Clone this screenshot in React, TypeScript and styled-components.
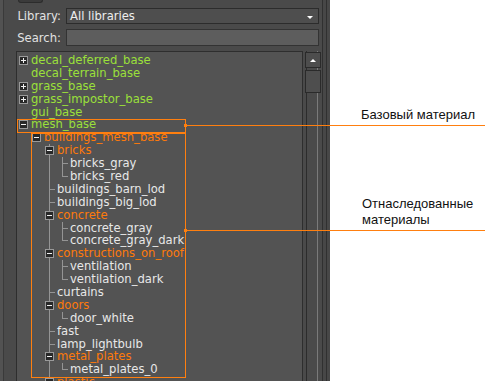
import React from "react";
import styled, { createGlobalStyle, css } from "styled-components";

type Tone = "base" | "derived" | "plain";
type Mark = "plus" | "minus" | "tee" | "end" | "none";

type TreeNode = {
  name: string;
  level: number;
  tone: Tone;
  mark: Mark;
  rails?: number[]; // levels whose guide line runs through this row
};

const nodes: TreeNode[] = [
  { name: "decal_deferred_base", level: 0, tone: "base", mark: "plus" },
  { name: "decal_terrain_base", level: 0, tone: "base", mark: "none" },
  { name: "grass_base", level: 0, tone: "base", mark: "plus" },
  { name: "grass_impostor_base", level: 0, tone: "base", mark: "plus" },
  { name: "gui_base", level: 0, tone: "base", mark: "none" },
  { name: "mesh_base", level: 0, tone: "base", mark: "minus" },
  { name: "buildings_mesh_base", level: 1, tone: "derived", mark: "minus" },
  { name: "bricks", level: 2, tone: "derived", mark: "minus", rails: [2] },
  { name: "bricks_gray", level: 3, tone: "plain", mark: "tee", rails: [2] },
  { name: "bricks_red", level: 3, tone: "plain", mark: "end", rails: [2] },
  { name: "buildings_barn_lod", level: 2, tone: "plain", mark: "tee" },
  { name: "buildings_big_lod", level: 2, tone: "plain", mark: "tee" },
  { name: "concrete", level: 2, tone: "derived", mark: "minus", rails: [2] },
  { name: "concrete_gray", level: 3, tone: "plain", mark: "tee", rails: [2] },
  { name: "concrete_gray_dark", level: 3, tone: "plain", mark: "end", rails: [2] },
  { name: "constructions_on_roof", level: 2, tone: "derived", mark: "minus", rails: [2] },
  { name: "ventilation", level: 3, tone: "plain", mark: "tee", rails: [2] },
  { name: "ventilation_dark", level: 3, tone: "plain", mark: "end", rails: [2] },
  { name: "curtains", level: 2, tone: "plain", mark: "tee" },
  { name: "doors", level: 2, tone: "derived", mark: "minus", rails: [2] },
  { name: "door_white", level: 3, tone: "plain", mark: "end", rails: [2] },
  { name: "fast", level: 2, tone: "plain", mark: "tee" },
  { name: "lamp_lightbulb", level: 2, tone: "plain", mark: "tee" },
  { name: "metal_plates", level: 2, tone: "derived", mark: "minus", rails: [2] },
  { name: "metal_plates_0", level: 3, tone: "plain", mark: "end", rails: [2] },
  { name: "plastic", level: 2, tone: "derived", mark: "minus", rails: [2] },
];

const GUIDE = "#949494";
const ORANGE = "#ff7f0f";

const GlobalStyle = createGlobalStyle`
  html, body {
    margin: 0;
    padding: 0;
    background: #ffffff;
    overflow: hidden;
  }
`;

const App: React.FC = () => {
  return (
    <>
      <GlobalStyle />
      <Frame>
        <Panel>
          <MainColumn>
            <TopStrip>
              <StubButton />
            </TopStrip>
            <FieldRow>
              <FieldLabel>Library:</FieldLabel>
              <Select>
                <span>All libraries</span>
                <DropArrow />
              </Select>
            </FieldRow>
            <FieldRow $gap={5}>
              <FieldLabel>Search:</FieldLabel>
              <SearchInput />
            </FieldRow>
            <TreeArea>
              <TreeBox>
                {nodes.map((node) => (
                  <Row key={node.name}>
                    {Array.from({ length: node.level }).map((_, i) => (
                      <Slot key={i} $rail={node.rails?.includes(i)} />
                    ))}
                    <Slot
                      $rail={node.rails?.includes(node.level)}
                      $branch={node.mark === "tee" || node.mark === "end" ? node.mark : undefined}
                    >
                      {(node.mark === "plus" || node.mark === "minus") && (
                        <Expander $open={node.mark === "minus"} />
                      )}
                    </Slot>
                    <Label $tone={node.tone}>{node.name}</Label>
                  </Row>
                ))}
              </TreeBox>
              <ScrollBar>
                <ScrollBtn>
                  <UpArrow />
                </ScrollBtn>
                <Thumb />
              </ScrollBar>
            </TreeArea>
          </MainColumn>
          <PanelEdge />
        </Panel>

        {/* annotation overlay */}
        <Highlight $x={17} $y={119} $w={169} $h={14} />
        <Highlight $x={31} $y={133} $w={155} $h={245} />
        <Callout $x={185} $y={125}>
          <Caption $offset={176}>Базовый материал</Caption>
        </Callout>
        <Callout $x={185} $y={230}>
          <Caption $offset={177}>
            Отнаследованные
            <br />
            материалы
          </Caption>
        </Callout>
      </Frame>
    </>
  );
};

const Frame = styled.div`
  position: relative;
  width: 485px;
  height: 381px;
  overflow: hidden;
  display: flex;
  background: #ffffff;
`;

const Panel = styled.div`
  flex: none;
  width: 330px;
  height: 100%;
  display: flex;
  background:
    linear-gradient(#3a3a3a, #3a3a3a) 3px 0 / 1px 100% no-repeat,
    linear-gradient(#525252, #525252) 0 0 / 3px 100% no-repeat,
    #4a4a4a;
  font-family: "DejaVu Sans", Verdana, sans-serif;
  font-size: 11.6px;
`;

const MainColumn = styled.div`
  flex: 1;
  min-width: 0;
  display: flex;
  flex-direction: column;
  padding-right: 3px;
`;

const PanelEdge = styled.div`
  flex: none;
  width: 8px;
  box-sizing: border-box;
  border-left: 1px solid #303030;
  background: linear-gradient(#303030, #303030) 3px 0 / 1px 100% no-repeat, #474747;
`;

const TopStrip = styled.div`
  height: 8px;
  flex: none;
`;

const StubButton = styled.div`
  margin-left: 18px;
  width: 25px;
  height: 3px;
  box-sizing: border-box;
  background: #3b3b3b;
  border: 1px solid #2c2c2c;
  border-top: none;
  border-radius: 0 0 5px 5px;
`;

const FieldRow = styled.div<{ $gap?: number }>`
  flex: none;
  display: flex;
  align-items: center;
  gap: 5px;
  margin-top: ${(p) => p.$gap ?? 0}px;
`;

const FieldLabel = styled.span`
  width: 61px;
  flex: none;
  text-align: right;
  color: #e2e2e2;
  line-height: 16px;
`;

const Select = styled.div`
  flex: 1;
  height: 16px;
  box-sizing: border-box;
  display: flex;
  align-items: center;
  justify-content: space-between;
  padding: 0 5px 0 3px;
  border: 1px solid #2c2c2c;
  background: #4e4e4e;
  color: #eeeeee;
  line-height: 14px;
`;

const DropArrow = styled.span`
  width: 0;
  height: 0;
  border-left: 3px solid transparent;
  border-right: 3px solid transparent;
  border-top: 3px solid #ffffff;
  margin-top: 2px;
`;

const SearchInput = styled.div`
  flex: 1;
  height: 17px;
  box-sizing: border-box;
  border: 1px solid #333333;
  background: #5d5d5d;
`;

const TreeArea = styled.div`
  flex: 1;
  min-height: 0;
  display: flex;
  margin-top: 5px;
`;

const TreeBox = styled.div`
  flex: none;
  margin-left: 16px;
  width: 287px;
  margin-bottom: -20px;
  box-sizing: border-box;
  padding-top: 2px;
  border: 1px solid #2e2e2e;
  background: #535353;
  overflow: hidden;
`;

const Row = styled.div`
  height: 12.9px;
  display: flex;
  align-items: center;
  padding-left: 1px;
  white-space: nowrap;
`;

const Slot = styled.span<{ $rail?: boolean; $branch?: "tee" | "end" }>`
  flex: none;
  width: 13px;
  height: 100%;
  display: flex;
  align-items: center;
  ${(p) =>
    p.$rail &&
    css`
      background: linear-gradient(${GUIDE}, ${GUIDE}) 5px 0 / 1px 100% no-repeat;
    `}
  ${(p) =>
    p.$branch === "tee" &&
    css`
      background:
        linear-gradient(${GUIDE}, ${GUIDE}) 5px 0 / 1px 100% no-repeat,
        linear-gradient(${GUIDE}, ${GUIDE}) 5px 6px / 6px 1px no-repeat;
    `}
  ${(p) =>
    p.$branch === "end" &&
    css`
      background:
        linear-gradient(${GUIDE}, ${GUIDE}) 5px 0 / 1px 7px no-repeat,
        linear-gradient(${GUIDE}, ${GUIDE}) 5px 6px / 6px 1px no-repeat;
    `}
`;

const Expander = styled.span<{ $open: boolean }>`
  margin-left: 1px;
  width: 9px;
  height: 9px;
  box-sizing: border-box;
  border: 1px solid #9a9a9a;
  background-color: #282828;
  background-image: ${(p) =>
    p.$open
      ? "linear-gradient(#f0f0f0, #f0f0f0)"
      : "linear-gradient(#f0f0f0, #f0f0f0), linear-gradient(#f0f0f0, #f0f0f0)"};
  background-repeat: no-repeat;
  background-position: ${(p) => (p.$open ? "1px 3px" : "1px 3px, 3px 1px")};
  background-size: ${(p) => (p.$open ? "5px 1px" : "5px 1px, 1px 5px")};
`;

const toneColor: Record<Tone, string> = {
  base: "#9be03a",
  derived: "#ff7a0a",
  plain: "#e8e8e8",
};

const Label = styled.span<{ $tone: Tone }>`
  color: ${(p) => toneColor[p.$tone]};
  line-height: 13px;
`;

const ScrollBar = styled.div`
  flex: none;
  width: 19px;
  box-sizing: border-box;
  padding-left: 2px;
  display: flex;
  flex-direction: column;
  background:
    linear-gradient(#2c2c2c, #2c2c2c) 3px 0 / 1px 100% no-repeat,
    linear-gradient(#7a7a7a, #7a7a7a) 14px 0 / 1px 100% no-repeat;
`;

const ScrollBtn = styled.div`
  margin-top: 1px;
  width: 16px;
  height: 16px;
  box-sizing: border-box;
  border: 1px solid #2a2a2a;
  background: #4d4d4d;
  display: flex;
  align-items: center;
  justify-content: center;
`;

const UpArrow = styled.span`
  width: 0;
  height: 0;
  border-left: 3px solid transparent;
  border-right: 3px solid transparent;
  border-bottom: 3px solid #ffffff;
`;

const Thumb = styled.div`
  margin-top: 2px;
  width: 16px;
  height: 23px;
  box-sizing: border-box;
  border: 1px solid #2a2a2a;
  background: #4e4e4e;
`;

const Highlight = styled.div<{ $x: number; $y: number; $w: number; $h: number }>`
  position: absolute;
  left: ${(p) => p.$x}px;
  top: ${(p) => p.$y}px;
  width: ${(p) => p.$w}px;
  height: ${(p) => p.$h}px;
  box-sizing: border-box;
  border: 1px solid ${ORANGE};
  pointer-events: none;
`;

const Callout = styled.div<{ $x: number; $y: number }>`
  position: absolute;
  left: ${(p) => p.$x}px;
  top: ${(p) => p.$y}px;
  right: 0;
  height: 1px;
  background: ${ORANGE};

  &::before {
    content: "";
    position: absolute;
    left: -1px;
    top: -1px;
    width: 3px;
    height: 3px;
    background: ${ORANGE};
  }
`;

const Caption = styled.div<{ $offset: number }>`
  position: absolute;
  left: ${(p) => p.$offset}px;
  bottom: 3px;
  font-family: "Liberation Sans", Arial, sans-serif;
  font-size: 13px;
  line-height: 16px;
  color: #111111;
  white-space: nowrap;
`;

export default App;
